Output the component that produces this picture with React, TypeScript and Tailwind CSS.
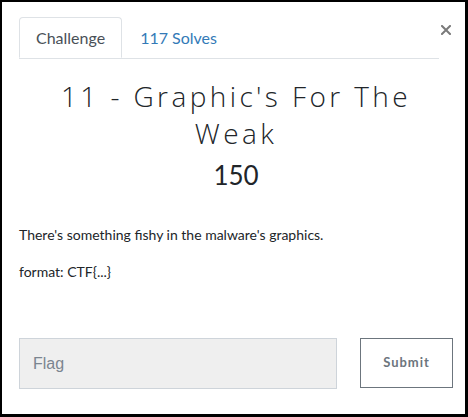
export default function App() {
  return (
    <div className="w-[468px] h-[417px] bg-white border-black border-l-2 border-t-2 border-r-[3px] border-b-[3px] font-['Lato',sans-serif] text-[#212529] flex flex-col pl-[17px] pr-[12px] pt-[15px]">
      <div className="flex items-start">
        <div className="flex-1 flex border-b border-[#dee2e6]">
          <div className="h-[41px] -mb-px px-[16px] flex items-center border border-b-white border-[#dee2e6] rounded-t-[4px] text-[16px] text-[#495057] bg-white">
            Challenge
          </div>
          <div className="h-[41px] px-[18px] flex items-center text-[16px] text-[#337ab7]">117 Solves</div>
        </div>
        <svg className="ml-[2px] mr-[2px] mt-[8px] w-[10px] h-[10px] shrink-0" viewBox="0 0 10 10">
          <path d="M1 1L9 9M9 1L1 9" stroke="#7a7a7a" strokeWidth="2" strokeLinecap="square" />
        </svg>
      </div>

      <div className="mt-[19px] text-center font-['Open_Sans',sans-serif] font-light text-[28px] leading-[37px] tracking-[3.4px] text-[#212529]">
        <div>11 - Graphic's For The</div>
        <div>Weak</div>
      </div>
      <div className="mt-[4px] text-center text-[26px] leading-[38px] text-[#212529]">150</div>

      <div className="mt-[31px] text-[14px] leading-[20px] text-[#212529]">
        <p>There's something fishy in the malware's graphics.</p>
        <p className="mt-[17px]">format: CTF{'{...}'}</p>
      </div>

      <div className="mt-[56px] flex items-start">
        <div className="w-[318px] shrink-0 h-[51px] bg-[#efefef] border border-[#ced4da] flex items-center pl-[13px] font-['Liberation_Sans',sans-serif] text-[16px] text-[#7b8590]">
          Flag
        </div>
        <div className="ml-[23px] w-[93px] shrink-0 h-[50px] border border-[#6c757d] flex items-center justify-center text-[13px] font-bold tracking-[1px] text-[#6c757d]">
          Submit
        </div>
      </div>
    </div>
  )
}
